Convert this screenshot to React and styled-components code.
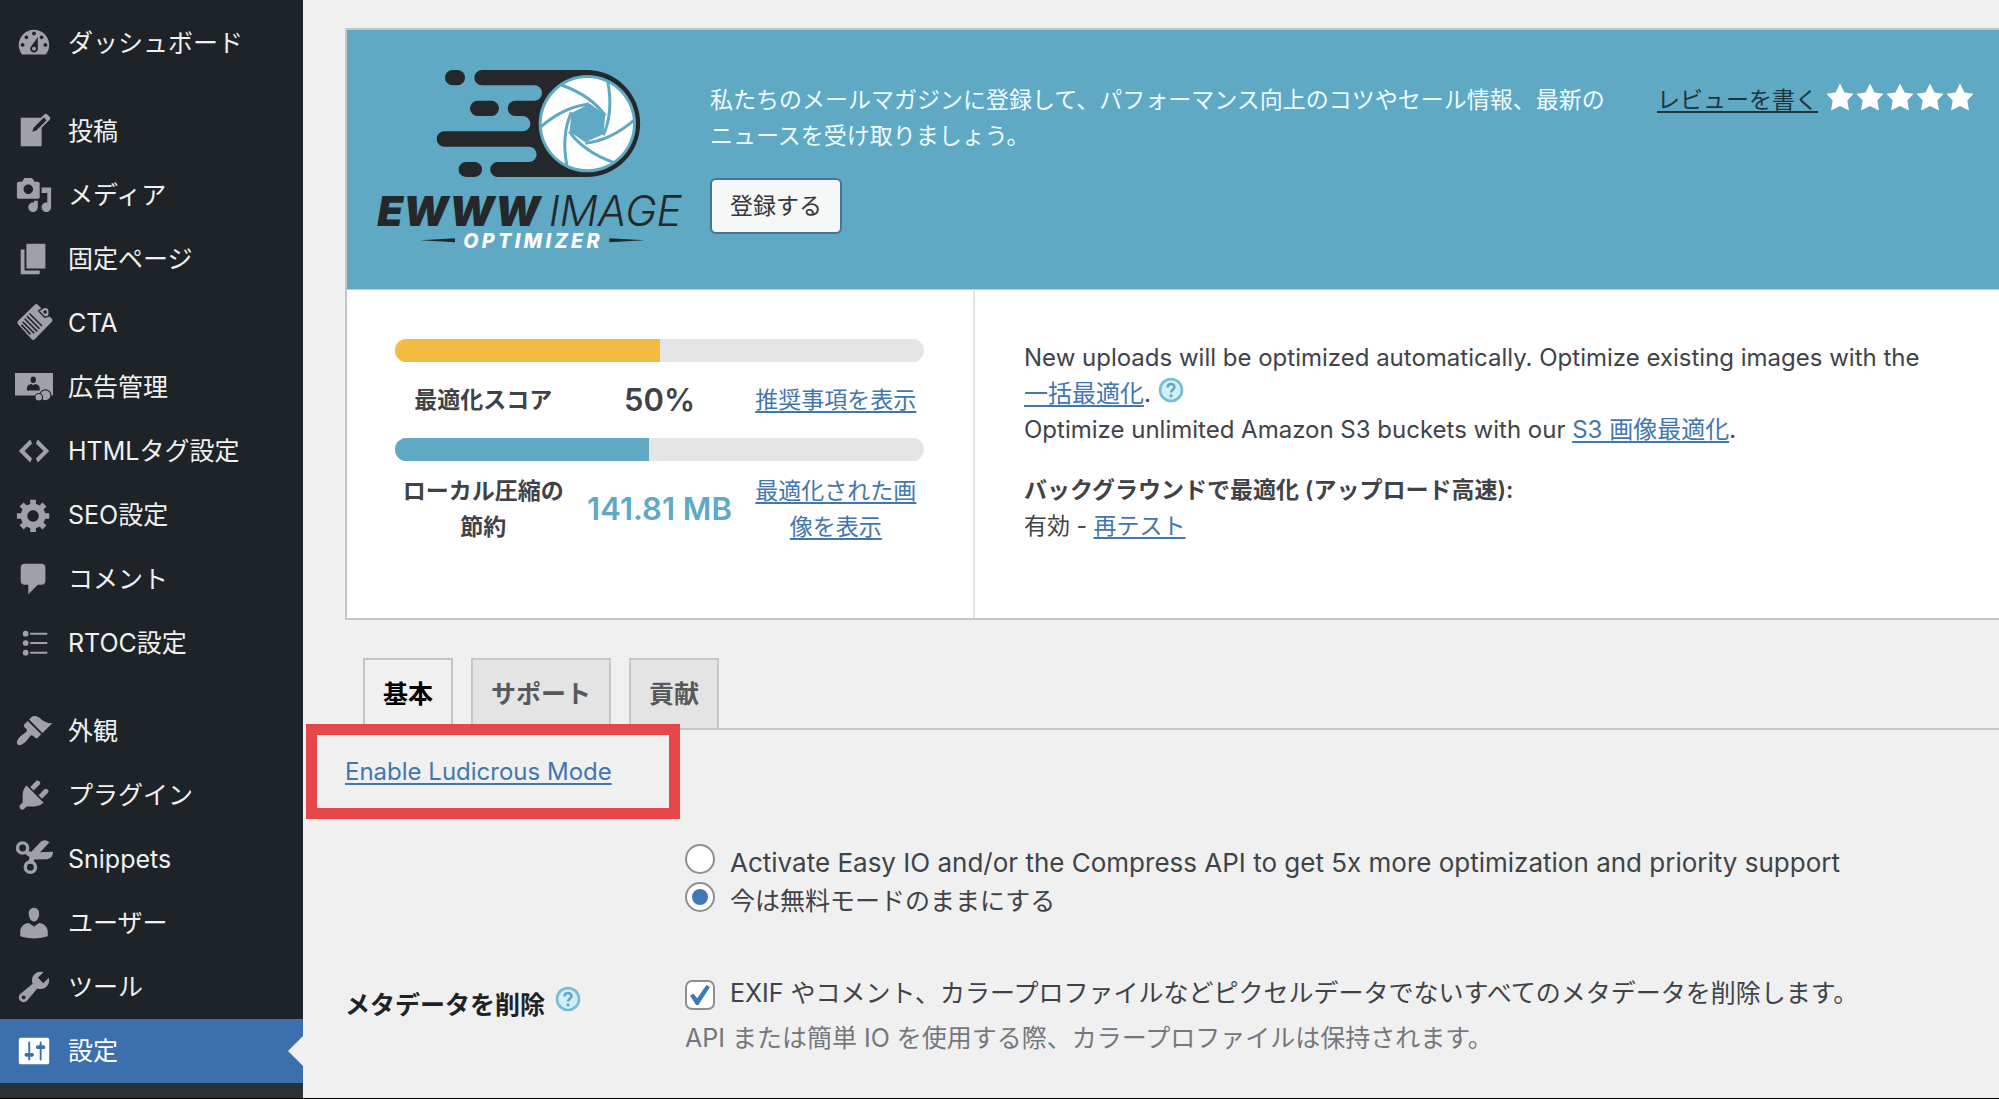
import React from "react";
import styled, { createGlobalStyle, css } from "styled-components";

const color = {
  page: "#f0f0f0",
  sidebar: "#1e2327",
  submenu: "#2c3136",
  icon: "#9ea2a7",
  accent: "#3b6fad",
  link: "#4276ae",
  teal: "#5fa9c5",
  yellow: "#f4bb41",
  track: "#e5e5e5",
  border: "#c5c6c8",
  text: "#3f4347",
  ink: "#1f2226",
  muted: "#74787c",
  mark: "#e7464b",
};

const GlobalStyle = createGlobalStyle`
  *, *::before, *::after { box-sizing: border-box; }
  body {
    margin: 0;
    background: ${color.page};
    color: ${color.text};
    font-family: Inter, "Noto Sans CJK JP", sans-serif;
    font-size: 23px;
    line-height: 36px;
  }
  ul, p, h1, h2 { margin: 0; padding: 0; }
  ul { list-style: none; }
  button, input { font: inherit; margin: 0; }
`;

const Shell = styled.div`
  display: flex;
  height: 100vh;
  overflow: hidden;
  border-bottom: 1px solid #000;
`;

/* Sidebar */

const Sidebar = styled.nav`
  flex: 0 0 303px;
  display: flex;
  flex-direction: column;
  gap: 24px;
  padding-top: 11px;
  background: ${color.sidebar};
`;

const MenuGroup = styled.ul`
  ${(p) => p.$fill && css`
    flex: 1;
    background: linear-gradient(${color.sidebar} 320px, ${color.submenu} 320px);
  `}
`;

const MenuLink = styled.a`
  position: relative;
  display: flex;
  align-items: center;
  gap: 15px;
  height: 64px;
  padding-left: 15px;
  color: #eff1f2;
  font-size: 25px;
  text-decoration: none;
  white-space: nowrap;

  svg {
    flex: none;
    width: 38px;
    height: 38px;
    fill: ${color.icon};
  }

  ${(p) => p.$active && css`
    background: ${color.accent};
    color: #fff;
    svg { fill: #fff; }
    &::after {
      content: "";
      position: absolute;
      right: 0;
      top: 17px;
      border: 15px solid transparent;
      border-left-width: 0;
      border-right-color: ${color.page};
    }
  `}
`;

/* Main column */

const Main = styled.main`
  flex: 1;
  min-width: 0;
  padding: 28px 0 0 42px;
`;

const Link = styled.a`
  color: ${color.link};
  text-decoration: underline;
  text-decoration-thickness: 2px;
  text-underline-offset: 3px;
`;

const Panel = styled.section`
  border: 2px solid ${color.border};
  border-right: 0;
  background: #fff;
`;

const Banner = styled.header`
  display: flex;
  align-items: flex-start;
  min-height: 260px;
  padding: 38px 24px 0 30px;
  border-bottom: 1px solid #b5d3df;
  background: ${color.teal};
`;

const Logo = styled.svg`
  flex: none;
  width: 312px;
  height: 192px;
`;

const Newsletter = styled.div`
  flex: 1;
  margin: 14px 40px 0 21px;
  color: #eefcff;
`;

const Button = styled.button`
  height: 56px;
  margin-top: 24px;
  padding: 0 18px;
  border: 2px solid #4573a3;
  border-radius: 6px;
  background: #f6f7f7;
  color: #33373b;
`;

const Review = styled.div`
  display: flex;
  align-items: center;
  gap: 7px;
  margin-top: 14px;
`;

const ReviewLink = styled(Link)`
  color: #20343e;
`;

const Stars = styled.span`
  display: flex;
  svg {
    width: 30px;
    height: 30px;
    margin-top: -6px;
    fill: #fff;
  }
`;

const Status = styled.div`
  display: grid;
  grid-template-columns: 628px 1fr;
  min-height: 328px;
`;

const Scores = styled.div`
  padding: 49px 49px 0 48px;
  border-right: 2px solid #e2e3e4;
`;

const Bar = styled.div`
  height: 23px;
  border-radius: 12px;
  background: ${color.track};
  overflow: hidden;
`;

const BarFill = styled.div`
  height: 100%;
  background: ${(p) => p.$color};
`;

const ScoreRow = styled.div`
  display: grid;
  grid-template-columns: repeat(3, 1fr);
  align-items: center;
  min-height: 76px;
  padding: 12px 0;
  text-align: center;
`;

const ScoreName = styled.span`
  font-weight: 600;
`;

const ScoreValue = styled.span`
  color: ${(p) => p.$color};
  font-size: 31px;
  font-weight: 600;
  white-space: nowrap;
`;

const Info = styled.div`
  padding: 50px 48px 0 49px;

  a { white-space: nowrap; }
`;

const Paragraph = styled.p`
  margin-bottom: 24px;
  font-size: ${(p) => (p.$lead ? "24px" : "23px")};
`;

const HelpIcon = styled.svg`
  width: 26px;
  height: 26px;
  vertical-align: -1px;
`;

/* Tabs */

const Tabs = styled.div`
  display: flex;
  gap: 18px;
  margin-top: 38px;
  padding-left: 18px;
  border-bottom: 2px solid ${color.border};
`;

const Tab = styled.button`
  height: 72px;
  margin-bottom: -2px;
  padding: 0 18px;
  border: 2px solid ${color.border};
  border-bottom-color: ${(p) => (p.$active ? color.page : color.border)};
  background: ${(p) => (p.$active ? color.page : "#e4e4e4")};
  color: ${(p) => (p.$active ? "#000" : "#56595c")};
  font-size: 25px;
  font-weight: 600;
`;

const ModeBar = styled.div`
  position: relative;
  padding-top: 24px;
  font-size: 24px;
`;

const Highlight = styled.div`
  position: absolute;
  left: -39px;
  top: -6px;
  width: 374px;
  height: 95px;
  border: 11px solid ${color.mark};
  pointer-events: none;
`;

/* Settings form */

const Settings = styled.form`
  display: grid;
  grid-template-columns: 340px 1fr;
  row-gap: 54px;
  margin-top: 54px;
  font-size: 25px;
  line-height: 38px;
`;

const SettingName = styled.h2`
  display: flex;
  align-items: flex-start;
  gap: 10px;
  margin-top: 12px;
  color: ${color.ink};
  font-size: 25px;
  font-weight: 600;
`;

const Choice = styled.label`
  display: flex;
  gap: 15px;
  color: ${color.text};
  font-size: ${(p) => (p.$lead ? "26px" : "25px")};
`;

const Radio = styled.input`
  appearance: none;
  flex: none;
  display: grid;
  place-content: center;
  width: 30px;
  height: 30px;
  border: 2px solid #8c8f94;
  border-radius: 50%;
  background: #fff;

  &:checked::before {
    content: "";
    width: 16px;
    height: 16px;
    border-radius: 50%;
    background: #3f78b8;
  }
`;

const Checkbox = styled(Radio)`
  margin-top: 6px;
  border-radius: 7px;

  &:checked::before {
    width: 20px;
    height: 20px;
    border-radius: 0;
    clip-path: polygon(0 52%, 18% 44%, 36% 66%, 82% 0, 100% 10%, 42% 100%, 30% 100%);
  }
`;

const Description = styled.p`
  margin-top: 7px;
  color: ${color.muted};
`;

/* Icons on a 20-unit grid */

const icons = {
  dashboard: (
    <path fillRule="evenodd" d="M3.76 16h12.48c1.1-1.37 1.76-3.11 1.76-5 0-4.42-3.58-8-8-8s-8 3.58-8 8c0 1.89.66 3.63 1.76 5zM10 4c.55 0 1 .45 1 1s-.45 1-1 1-1-.45-1-1 .45-1 1-1zM6 6c.55 0 1 .45 1 1s-.45 1-1 1-1-.45-1-1 .45-1 1-1zm8 0c.55 0 1 .45 1 1s-.45 1-1 1-1-.45-1-1 .45-1 1-1zm-5.37 5.55L12 7v6c0 1.1-.9 2-2 2s-2-.9-2-2c0-.57.24-1.08.63-1.45zM4 10c.55 0 1 .45 1 1s-.45 1-1 1-1-.45-1-1 .45-1 1-1zm12 0c.55 0 1 .45 1 1s-.45 1-1 1-1-.45-1-1 .45-1 1-1zm-5 3c0-.55-.45-1-1-1s-1 .45-1 1 .45 1 1 1 1-.45 1-1z" />
  ),
  post: (
    <path fillRule="evenodd" d="M16.89 1.2l1.41 1.41c.39.39.39 1.02 0 1.41L14 8.33V18H3V3h10.67l1.8-1.8c.4-.39 1.03-.4 1.42 0zm-5.66 8.48l5.37-5.36-1.42-1.42-5.36 5.37-.71 2.12z" />
  ),
  media: (
    <path fillRule="evenodd" d="M13 11V4c0-.55-.45-1-1-1h-1.67L9 1H5L3.67 3H2c-.55 0-1 .45-1 1v7c0 .55.45 1 1 1h10c.55 0 1-.45 1-1zM7 4.5c1.38 0 2.5 1.12 2.5 2.5S8.38 9.5 7 9.5 4.5 8.38 4.5 7 5.62 4.5 7 4.5zM14 6h5v10.5c0 1.38-1.12 2.5-2.5 2.5S14 17.88 14 16.5s1.12-2.5 2.5-2.5c.17 0 .34.02.5.05V9h-3V6zm-4 8.05V13h2v3.5c0 1.38-1.12 2.5-2.5 2.5S7 17.88 7 16.5 8.12 14 9.5 14c.17 0 .34.02.5.05z" />
  ),
  page: <path d="M6 15V2h10v13H6zm-1 1h8v2H3V5h2v11z" />,
  clipboard: (
    <>
      <path d="M10.4.4Q11.2-.3 12 .4L19.4 7.8Q20.1 8.6 19.4 9.4L10.4 18.6Q9.6 19.4 8.8 18.6L1.6 10.6Q.9 9.8 1.6 9z" />
      <path d="M12.4 3.6L15.2 1.8Q18.2 1.4 18 4.6L17.8 6.4L15.6 7Z" fill={color.icon} stroke={color.sidebar} strokeWidth=".7" />
      <circle cx="15.8" cy="4.2" r=".9" fill={color.sidebar} />
      <path d="M7.6 5l6.6 6.6M6.3 6.4l6.6 6.6M5.1 7.8l6.6 6.6M4.1 9.4l6 6M3.4 11l4.8 5" stroke={color.sidebar} strokeWidth=".8" fill="none" />
    </>
  ),
  ads: (
    <>
      <path d="M0 2.6h20v11.9H0z" />
      <ellipse cx="9.6" cy="6.2" rx="1.4" ry="1.7" fill={color.sidebar} />
      <path d="M6.2 11.8V10.6Q6.4 8.7 8.6 8.4L9.6 9.1 10.6 8.4Q12.8 8.7 13 10.6V11.8z" fill={color.sidebar} />
      <circle cx="16" cy="14.4" r="2.9" stroke={color.sidebar} strokeWidth=".6" />
      <circle cx="12.5" cy="15.4" r="2" stroke={color.sidebar} strokeWidth=".6" />
    </>
  ),
  code: <path d="M9 6l-4 4 4 4-1 2-6-6 6-6zm2 8l4-4-4-4 1-2 6 6-6 6z" />,
  gear: (
    <path fillRule="evenodd" d="M18 12h-2.18c-.17.7-.44 1.35-.81 1.93l1.54 1.54-2.1 2.1-1.54-1.54c-.58.36-1.23.63-1.91.79V19H8v-2.18c-.68-.16-1.33-.43-1.91-.79l-1.54 1.54-2.12-2.12 1.54-1.54c-.36-.58-.63-1.23-.79-1.91H1V9.03h2.17c.16-.7.44-1.35.8-1.94L2.43 5.55l2.1-2.1 1.54 1.54c.58-.37 1.24-.64 1.93-.81V2h3v2.18c.68.16 1.33.43 1.91.79l1.54-1.54 2.12 2.12-1.54 1.54c.36.59.64 1.24.8 1.94H18V12zm-8.5 1.5c1.66 0 3-1.34 3-3s-1.34-3-3-3-3 1.34-3 3 1.34 3 3 3z" />
  ),
  comment: <path d="M5 2h9c1.1 0 2 .9 2 2v7c0 1.1-.9 2-2 2h-2l-5 5v-5H5c-1.1 0-2-.9-2-2V4c0-1.1.9-2 2-2z" />,
  list: (
    <>
      <circle cx="5.6" cy="5.1" r="1.5" />
      <circle cx="5.6" cy="10" r="1.5" />
      <circle cx="5.6" cy="15.1" r="1.5" />
      <path d="M8 4.6h9v1H8zM8 9.5h9v1H8zM8 14.6h9v1H8z" />
    </>
  ),
  brush: (
    <path d="M14.48 11.06L7.41 3.99l1.5-1.5c.5-.56 2.3-.47 3.51.32 1.21.8 1.43 1.28 2.91 2.1 1.18.64 2.45 1.26 4.45.85zm-.71.71L6.7 4.7 4.93 6.47c-.39.39-.39 1.02 0 1.41l1.06 1.06c.39.39.39 1.03 0 1.42-.6.6-1.43 1.11-2.21 1.69-.35.26-.7.53-1.01.84C1.43 14.23.4 16.08 1.4 17.07c.99 1 2.84-.03 4.18-1.36.31-.31.58-.66.85-1.02.57-.78 1.08-1.61 1.69-2.21.39-.39 1.02-.39 1.41 0l1.06 1.06c.39.39 1.02.39 1.41 0z" />
  ),
  plug: (
    <path d="M13.11 4.36L9.87 7.6 8 5.73l3.24-3.24c.35-.34 1.05-.2 1.56.32.52.51.66 1.21.31 1.55zm-8 1.77l.91-1.12 9.01 9.01-1.19.84c-.71.71-2.63 1.16-3.82 1.16H6.14L4.9 17.26c-.59.59-1.54.59-2.12 0-.59-.58-.59-1.53 0-2.12l1.24-1.24v-3.88c0-1.13.4-3.19 1.09-3.89zm7.26 3.97l3.24-3.24c.34-.35 1.04-.21 1.55.31.52.51.66 1.21.31 1.55l-3.24 3.25z" />
  ),
  scissors: (
    <>
      <circle cx="4" cy="4.2" r="2.7" fill="none" stroke={color.icon} strokeWidth="1.8" />
      <circle cx="8.1" cy="14.3" r="2.7" fill="none" stroke={color.icon} strokeWidth="1.8" />
      <path d="M5.6 7.6L7 5.8 8.6 6.2 13.4 1Q15.6-.7 18.2 1.2L13.2 6.4 20 6.2Q20.1 9.4 17 10.1L10.2 10.3 9.8 11.8 7 11.6 7.7 9z" />
    </>
  ),
  user: (
    <path d="M10 9.25c-2.27 0-2.73-3.44-2.73-3.44C7 4.02 7.82 2 9.97 2c2.16 0 2.98 2.02 2.71 3.81 0 0-.41 3.44-2.68 3.44zm0 2.57L12.72 10c2.39 0 4.52 2.33 4.52 4.53v2.49s-3.65 1.13-7.24 1.13c-3.65 0-7.24-1.13-7.24-1.13v-2.49c0-2.25 1.94-4.48 4.47-4.48z" />
  ),
  wrench: (
    <path fillRule="evenodd" d="M16.68 9.77c-1.34 1.34-3.3 1.67-4.95.99l-5.41 6.52c-.99.99-2.59.99-3.58 0s-.99-2.59 0-3.57l6.52-5.42c-.68-1.65-.35-3.61.99-4.95 1.28-1.28 3.12-1.62 4.72-1.06l-2.89 2.89 2.82 2.82 2.86-2.87c.53 1.58.18 3.39-1.08 4.65zM3.81 16.21c.4.39 1.04.39 1.43 0 .4-.4.4-1.04 0-1.43-.39-.4-1.03-.4-1.43 0-.39.39-.39 1.03 0 1.43z" />
  ),
  sliders: (
    <path fillRule="evenodd" d="M18 16V4c0-.55-.45-1-1-1H3c-.55 0-1 .45-1 1v12c0 .55.45 1 1 1h14c.55 0 1-.45 1-1zM8 11h1c.55 0 1 .45 1 1s-.45 1-1 1H8v1.5c0 .28-.22.5-.5.5s-.5-.22-.5-.5V13H6c-.55 0-1-.45-1-1s.45-1 1-1h1V5.5c0-.28.22-.5.5-.5s.5.22.5.5V11zm5-2h-1c-.55 0-1-.45-1-1s.45-1 1-1h1V5.5c0-.28.22-.5.5-.5s.5.22.5.5V7h1c.55 0 1 .45 1 1s-.45 1-1 1h-1v5.5c0 .28-.22.5-.5.5s-.5-.22-.5-.5V9z" />
  ),
};

const menu = [
  [["dashboard", "ダッシュボード"]],
  [
    ["post", "投稿"],
    ["media", "メディア"],
    ["page", "固定ページ"],
    ["clipboard", "CTA"],
    ["ads", "広告管理"],
    ["code", "HTMLタグ設定"],
    ["gear", "SEO設定"],
    ["comment", "コメント"],
    ["list", "RTOC設定"],
  ],
  [
    ["brush", "外観"],
    ["plug", "プラグイン"],
    ["scissors", "Snippets"],
    ["user", "ユーザー"],
    ["wrench", "ツール"],
    ["sliders", "設定"],
  ],
];

function Help() {
  return (
    <HelpIcon viewBox="0 0 26 26" role="img" aria-label="ヘルプ">
      <circle cx="13" cy="13" r="11" fill="#d3eff6" stroke="#76bdd2" strokeWidth="2.6" />
      <path d="M9.6 10.4C9.6 5.9 16.4 6 16.4 10.2 16.4 12.7 13 12.8 13 15.6" fill="none" stroke="#5fa9c5" strokeWidth="2.6" />
      <circle cx="13" cy="18.8" r="1.6" fill="#5fa9c5" />
    </HelpIcon>
  );
}

function BrandLogo() {
  const dark = "#25282a";
  return (
    <Logo viewBox="141 144 936 576" role="img" aria-label="EWWW Image Optimizer">
      <g fill={dark}>
        <rect x="345" y="150" width="60" height="46" rx="23" />
        <rect x="420" y="242" width="87" height="46" rx="23" />
        <rect x="386" y="426" width="70" height="45" rx="22" />
        <path d="M456 150H770A160 160 0 0 1 770 471H503A22 22 0 0 1 503 426H597A23 23 0 0 0 597 380H343A23 23 0 0 1 343 334H578A23 23 0 0 0 578 288H556A23 23 0 0 1 556 242H613A23 23 0 0 0 613 196H456A23 23 0 0 1 456 150Z" />
      </g>
      <circle cx="772" cy="311" r="146" fill={color.teal} />
      <circle cx="772" cy="311" r="137" fill="#fff" />
      <polygon points="780,251 826,285 820,343 766,367 719,335 724,279" fill={color.teal} />
      <g fill="none" stroke={color.teal} strokeWidth="9">
        {[0, 60, 120, 180, 240, 300].map((angle) => (
          <path key={angle} d="M694 195Q782 226 826 287" transform={`rotate(${angle} 772 311)`} />
        ))}
      </g>
      <g fontFamily="Inter, sans-serif" fontStyle="italic">
        <text x="142" y="617" fontSize="125" fontWeight="900" fill={dark}>EWWW</text>
        <text x="656" y="617" fontSize="127" fontWeight="300" fill={dark}>IMAGE</text>
        <text x="400" y="683" fontSize="59" fontWeight="800" fill="#fff" letterSpacing="10">OPTIMIZER</text>
      </g>
      <path d="M270 661L375 655V667ZM945 661L838 655V667Z" fill={dark} />
    </Logo>
  );
}

export default function App() {
  return (
    <>
      <GlobalStyle />
      <Shell>
        <Sidebar aria-label="管理メニュー">
          {menu.map((group, index) => (
            <MenuGroup key={index} $fill={index === 2}>
              {group.map(([icon, label]) => (
                <li key={label}>
                  <MenuLink href="#" $active={icon === "sliders"}>
                    <svg viewBox="0 0 20 20" aria-hidden="true">{icons[icon]}</svg>
                    {label}
                  </MenuLink>
                </li>
              ))}
            </MenuGroup>
          ))}
        </Sidebar>

        <Main>
          <Panel>
            <Banner>
              <BrandLogo />
              <Newsletter>
                <p>私たちのメールマガジンに登録して、パフォーマンス向上のコツやセール情報、最新のニュースを受け取りましょう。</p>
                <Button type="button">登録する</Button>
              </Newsletter>
              <Review>
                <ReviewLink href="#">レビューを書く</ReviewLink>
                <Stars aria-hidden="true">
                  {[1, 2, 3, 4, 5].map((n) => (
                    <svg key={n} viewBox="0 0 20 20">
                      <path d="M10 1l3 6 6 .75-4.12 4.62L16 19l-6-3-6 3 1.13-6.63L1 7.75 7 7z" />
                    </svg>
                  ))}
                </Stars>
              </Review>
            </Banner>

            <Status>
              <Scores>
                <Bar><BarFill $color={color.yellow} style={{ width: "50%" }} /></Bar>
                <ScoreRow>
                  <ScoreName>最適化スコア</ScoreName>
                  <ScoreValue $color={color.text}>50%</ScoreValue>
                  <Link href="#">推奨事項を表示</Link>
                </ScoreRow>
                <Bar><BarFill $color={color.teal} style={{ width: "48%" }} /></Bar>
                <ScoreRow>
                  <ScoreName>ローカル圧縮の節約</ScoreName>
                  <ScoreValue $color={color.teal}>141.81 MB</ScoreValue>
                  <Link href="#">最適化された画像を表示</Link>
                </ScoreRow>
              </Scores>
              <Info>
                <Paragraph $lead>
                  New uploads will be optimized automatically. Optimize existing images with the
                  <br />
                  <Link href="#">一括最適化</Link>. <Help />
                  <br />
                  Optimize unlimited Amazon S3 buckets with our <Link href="#">S3 画像最適化</Link>.
                </Paragraph>
                <Paragraph>
                  <ScoreName>バックグラウンドで最適化 (アップロード高速):</ScoreName>
                  <br />
                  有効 - <Link href="#">再テスト</Link>
                </Paragraph>
              </Info>
            </Status>
          </Panel>

          <Tabs role="tablist">
            <Tab type="button" role="tab" aria-selected="true" $active>基本</Tab>
            <Tab type="button" role="tab" aria-selected="false">サポート</Tab>
            <Tab type="button" role="tab" aria-selected="false">貢献</Tab>
          </Tabs>

          <ModeBar>
            <Link href="#">Enable Ludicrous Mode</Link>
            <Highlight />
          </ModeBar>

          <Settings>
            <div />
            <div>
              <Choice $lead>
                <Radio type="radio" name="mode" />
                Activate Easy IO and/or the Compress API to get 5x more optimization and priority support
              </Choice>
              <Choice>
                <Radio type="radio" name="mode" defaultChecked />
                今は無料モードのままにする
              </Choice>
            </div>
            <SettingName>
              メタデータを削除 <Help />
            </SettingName>
            <div>
              <Choice>
                <Checkbox type="checkbox" defaultChecked />
                EXIF やコメント、カラープロファイルなどピクセルデータでないすべてのメタデータを削除します。
              </Choice>
              <Description>API または簡単 IO を使用する際、カラープロファイルは保持されます。</Description>
            </div>
          </Settings>
        </Main>
      </Shell>
    </>
  );
}
